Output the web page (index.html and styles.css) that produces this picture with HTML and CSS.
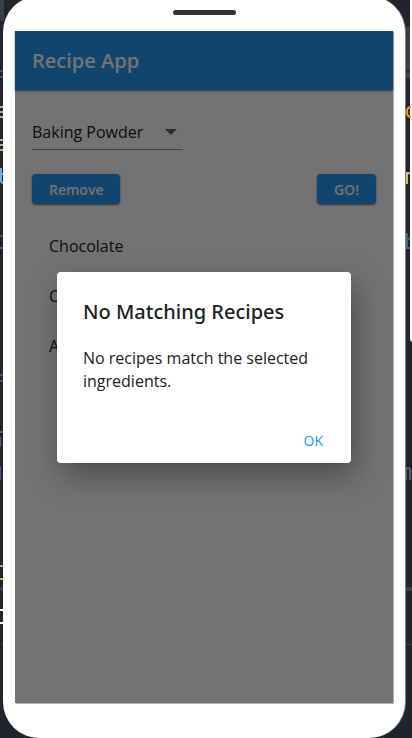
FILE: index.html
```html
<!DOCTYPE html>
<html lang="en">
<head>
<meta charset="utf-8">
<meta name="viewport" content="width=device-width, initial-scale=1">
<title>Recipe App</title>
<link rel="stylesheet" href="styles.css">
</head>
<body>
<svg class="strip strip-left" width="4" height="738" aria-hidden="true">
  <path fill="#363f4b" d="M0 0h4v21H0z"/>
  <path stroke="#4d535e" stroke-width="2" d="M0 71h4M0 77h4M0 236h4M0 375h4M0 381h4"/>
  <path stroke="#98c379" stroke-width="2" d="M0 107h4M0 112h4M0 117h4M0 140h4M0 145h4M0 150h4"/>
  <path stroke="#61afef" stroke-width="2" fill="none" d="M0 174h4M1 168v13q0 2 3 2"/>
  <path stroke="#4d5d7d" stroke-width="2" d="M0 248h4M0 432h4M0 437v10M0 466v14"/>
  <path stroke="#d9a35c" stroke-width="2" d="M0 566h4M0 579h4"/>
  <path stroke="#ffffff" stroke-width="2" d="M0 610h4M0 623h4"/>
  <path fill="#3a3c42" d="M0 587h4v4H0zM0 644h4v1H0z"/>
</svg>
<svg class="strip strip-right" width="7" height="738" aria-hidden="true">
  <path fill="#3b3e42" d="M0 27h7v51H0zM0 587h7v4H0zM0 644h7v1H0z"/>
  <path stroke="#1f2228" d="M0 34h7M0 71h7"/>
  <path fill="#ffffff" d="M5 0h2v342q-2-1-2-3z"/>
  <path stroke="#ff9800" stroke-width="2" fill="none" d="M6 107q-4 0-4 5t4 5"/>
  <path stroke="#e5b567" stroke-width="2" fill="none" d="M2 172v12M2 174q1-1 3-1"/>
  <path stroke="#50627a" stroke-width="2" fill="none" d="M2 233v16M2 240q2-2 3-1M2 248h3M1 480v-11q2-2 4 0v11"/>
</svg>

<div class="phone">
  <div class="speaker"></div>
  <div class="screen">
    <header class="app-bar"><h1>Recipe App</h1></header>
    <main class="content">
      <div class="picker">
        <select aria-label="Ingredient">
          <option>Baking Powder</option>
        </select>
        <svg class="arrow" width="12" height="6" viewBox="0 0 12 6" aria-hidden="true"><path d="M0 0h12L6 6z"/></svg>
      </div>
      <div class="actions">
        <button class="raised" type="button">Remove</button>
        <button class="raised" type="button">GO!</button>
      </div>
      <ul class="ingredients">
        <li>Chocolate</li>
        <li>C</li>
        <li>A</li>
      </ul>
    </main>
    <div class="backdrop">
      <div class="dialog" role="alertdialog" aria-modal="true" aria-labelledby="dialog-title" aria-describedby="dialog-text">
        <h2 id="dialog-title">No Matching Recipes</h2>
        <p id="dialog-text">No recipes match the selected ingredients.</p>
        <div class="dialog-actions"><button class="flat" type="button">OK</button></div>
      </div>
    </div>
  </div>
</div>
</body>
</html>
```
FILE: styles.css
```css
* {
  box-sizing: border-box;
}

body {
  margin: 0;
  height: 100vh;
  overflow: hidden;
  display: flex;
  position: relative;
  background: #21242c;
  color: #212121;
  font-family: "Open Sans", "Noto Sans", sans-serif;
  font-size: 16px;
}

.strip {
  position: absolute;
  top: 0;
}

.strip-left {
  left: 0;
}

.strip-right {
  right: 0;
}

.phone {
  position: relative;
  flex: 1;
  display: flex;
  flex-direction: column;
  margin: -4px 7px 0 3px;
  padding: 14px 12px 35px;
  border-radius: 36px;
  background: #ffffff;
  box-shadow: 1px 0 0 #7c7f84;
}

.speaker {
  width: 63px;
  height: 5px;
  margin: 0 auto 16px;
  border-radius: 3px;
  background: #333333;
}

.screen {
  position: relative;
  flex: 1;
  display: flex;
  flex-direction: column;
  background: #ffffff;
  box-shadow: 1px 1px 0 #b0b0b0;
}

.app-bar {
  display: flex;
  align-items: center;
  height: 59px;
  padding: 0 17px;
  background: #2699f2;
  color: #ffffff;
  box-shadow: 0 1px 2px rgba(0, 0, 0, 0.5);
}

.app-bar h1 {
  margin: 0;
  font-size: 20px;
  font-weight: 600;
}

.content {
  padding: 25px 17px;
}

.picker {
  position: relative;
  width: 151px;
  border-bottom: 1px solid #949494;
}

.picker select {
  display: block;
  width: 100%;
  height: 34px;
  padding: 0;
  border: 0;
  appearance: none;
  background: transparent;
  color: #212121;
  font: inherit;
}

.arrow {
  position: absolute;
  right: 6px;
  top: 14px;
  fill: #616161;
}

.actions {
  display: flex;
  justify-content: space-between;
  margin-top: 24px;
}

.raised {
  height: 30px;
  padding: 0 17px;
  border: 0;
  border-radius: 4px;
  background: #2699f2;
  color: #ffffff;
  font: inherit;
  font-size: 14px;
  font-weight: 600;
  box-shadow: 0 1px 2px rgba(0, 0, 0, 0.6);
}

.ingredients {
  margin: 17px 0 0;
  padding: 0 17px;
  list-style: none;
}

.ingredients li {
  height: 50px;
  line-height: 50px;
}

.backdrop {
  position: absolute;
  inset: 0;
  display: flex;
  align-items: center;
  justify-content: center;
  background: rgba(0, 0, 0, 0.55);
}

.dialog {
  width: 294px;
  padding: 25px 18px 8px 26px;
  border-radius: 4px;
  background: #ffffff;
  box-shadow: 4px 12px 30px rgba(0, 0, 0, 0.35);
}

.dialog h2 {
  margin: 0;
  font-family: "Noto Sans", "Open Sans", sans-serif;
  font-size: 20px;
  font-weight: 500;
  line-height: 30px;
}

.dialog p {
  margin: 20px 8px 0 0;
  line-height: 23px;
}

.dialog-actions {
  display: flex;
  justify-content: flex-end;
  margin-top: 34px;
}

.flat {
  height: 28px;
  padding: 0 10px;
  border: 0;
  background: transparent;
  color: #2196f3;
  font: inherit;
  font-size: 14px;
  font-weight: 500;
}
```
